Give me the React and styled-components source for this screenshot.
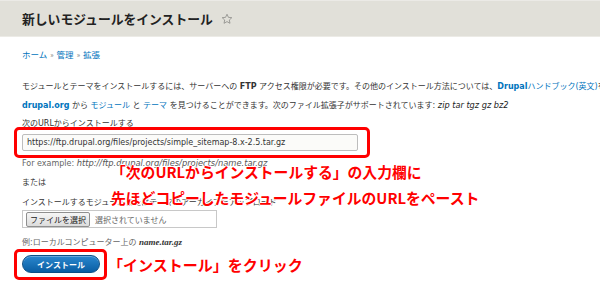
import React from 'react'
import styled, { createGlobalStyle } from 'styled-components'

const GlobalStyle = createGlobalStyle`
  html, body {
    margin: 0;
    padding: 0;
    background: #fff;
    overflow: hidden;
  }
  body {
    width: 600px;
    height: 294px;
    font-family: "DejaVu Sans", "Noto Sans CJK JP", sans-serif;
    color: #333;
  }
`

const Header = styled.header`
  display: flex;
  align-items: center;
  gap: 8px;
  height: 37px;
  padding: 0 22px;
  background: #e1e0d9;
  border-top: 1px solid #ebeae6;
  border-bottom: 1px solid #ecebe6;
  box-sizing: border-box;
`
const Title = styled.h1`
  margin: 0;
  font-family: "Noto Sans CJK JP", sans-serif;
  font-size: 12.8px;
  font-weight: 700;
  color: #222;
`
const Star = styled.svg`
  width: 12px;
  height: 12px;
  margin-top: 1px;
`

const Main = styled.main`
  padding: 0 22px;
  white-space: nowrap;
`
const Breadcrumb = styled.nav`
  display: flex;
  align-items: center;
  gap: 3px;
  margin-top: 11px;
  height: 12px;
  font-family: "Noto Sans CJK JP", sans-serif;
  font-size: 8.5px;
`
const Link = styled.a`
  color: #0074bd;
  text-decoration: none;
  font-weight: ${props => (props.$strong ? 700 : 400)};
`
const Sep = styled.span`
  color: #777;
  font-size: 7px;
`
const Para = styled.p`
  margin: ${props => props.$top}px 0 0;
  line-height: 12px;
  font-size: 8px;
`
const Strong = styled.b`
  font-weight: 700;
`
const Ext = styled.em`
  font-style: italic;
  font-family: "DejaVu Sans", sans-serif;
  font-size: 8.2px;
  color: #222;
`

const Form = styled.section`
  position: relative;
  margin-top: 6px;
`
const Label = styled.div`
  margin-top: ${props => props.$top || 0}px;
  line-height: 12px;
  font-size: 8px;
`
const Marked = styled.div`
  position: relative;
  display: ${props => (props.$inline ? 'inline-block' : 'block')};
  vertical-align: top;
  margin-top: ${props => props.$top || 0}px;
  &::after {
    content: '';
    position: absolute;
    top: ${props => props.$t}px;
    bottom: ${props => props.$b}px;
    left: ${props => props.$l}px;
    right: ${props => props.$r}px;
    border: 3px solid #f00;
    border-radius: 5px;
    pointer-events: none;
  }
`
const UrlInput = styled.input`
  display: block;
  width: 336px;
  height: 17px;
  margin: 0;
  padding: 0 4px;
  box-sizing: border-box;
  border: 1px solid #bdbdbd;
  border-radius: 2px;
  background: #fbfbf9;
  font-family: "DejaVu Sans", sans-serif;
  font-size: 8px;
  color: #333;
`
const Hint = styled.div`
  margin-top: ${props => props.$top || 0}px;
  line-height: 12px;
  font-size: 8px;
  color: #666;
`
const HintCode = styled.em`
  font-style: italic;
  font-family: ${props => (props.$serif ? '"Liberation Serif", serif' : '"DejaVu Sans", sans-serif')};
  font-weight: ${props => (props.$serif ? 700 : 400)};
  font-size: ${props => (props.$serif ? 9 : 8.3)}px;
  color: ${props => (props.$serif ? '#333' : '#555')};
`
const FileBox = styled.div`
  display: flex;
  align-items: center;
  gap: 5px;
  width: 195px;
  height: 18px;
  margin-top: 1px;
  padding: 0 3px;
  box-sizing: border-box;
  border: 1px solid #c8c8c8;
  background: #fff;
`
const FileButton = styled.span`
  display: inline-flex;
  align-items: center;
  height: 13px;
  padding: 0 3px;
  border: 1px solid #8f8f8f;
  border-radius: 2px;
  background: linear-gradient(#f6f6f6, #dcdcdc);
  font-family: "Noto Sans CJK JP", sans-serif;
  font-size: 8px;
  color: #222;
`
const FileName = styled.span`
  font-family: "Noto Sans CJK JP", sans-serif;
  font-size: 8px;
  color: #666;
`
const ActionRow = styled.div`
  display: flex;
  align-items: center;
  gap: 8px;
  margin-top: 6px;
`
const Button = styled.button`
  display: block;
  width: 78px;
  height: 18px;
  padding: 0;
  border: 1px solid #0b4f86;
  border-radius: 9px;
  background: linear-gradient(#2a87ce, #0a5ea3);
  color: #fff;
  font-family: "Noto Sans CJK JP", sans-serif;
  font-size: 8px;
  font-weight: 700;
  box-shadow: inset 0 1px 0 rgba(255, 255, 255, 0.3);
`
const Note = styled.span`
  font-family: "Noto Sans CJK JP", sans-serif;
  font-size: 15px;
  font-weight: 700;
  color: #f00;
  line-height: 1;
`
const Callout = styled.div`
  position: absolute;
  top: 41px;
  left: 89px;
  font-family: "Noto Sans CJK JP", sans-serif;
  font-size: 14.8px;
  font-weight: 700;
  line-height: 26px;
  color: #f00;
  text-shadow: 0 0 2px #fff, 1px 0 0 #fff, -1px 0 0 #fff, 0 1px 0 #fff, 0 -1px 0 #fff;
`

export default function App () {
  return (
    <>
      <GlobalStyle />
      <Header>
        <Title>新しいモジュールをインストール</Title>
        <Star viewBox='0 0 24 24'>
          <path
            d='M12 2.5l2.9 6.2 6.7.7-5 4.6 1.4 6.6L12 17.2l-6 3.4 1.4-6.6-5-4.6 6.7-.7z'
            fill='none'
            stroke='#8a8a86'
            strokeWidth='1.6'
            strokeLinejoin='round'
          />
        </Star>
      </Header>
      <Main>
        <Breadcrumb>
          <Link href='#'>ホーム</Link>
          <Sep>»</Sep>
          <Link href='#'>管理</Link>
          <Sep>»</Sep>
          <Link href='#'>拡張</Link>
        </Breadcrumb>
        <Para $top={21}>
          モジュールとテーマをインストールするには、サーバーへの <Strong>FTP</Strong> アクセス権限が必要です。その他のインストール方法については、<Link href='#'><Strong>Drupal</Strong>ハンドブック(英文)</Link>を参照してください。
        </Para>
        <Para $top={6}>
          <Link href='#' $strong>drupal.org</Link> から <Link href='#'>モジュール</Link> と <Link href='#'>テーマ</Link> を見つけることができます。次のファイル拡張子がサポートされています: <Ext>zip tar tgz gz bz2</Ext>
        </Para>
        <Form>
          <Label>次のURLからインストールする</Label>
          <Marked $top={4} $t={-7} $b={-7} $l={-8} $r={-12} $inline>
            <UrlInput readOnly value='https://ftp.drupal.org/files/projects/simple_sitemap-8.x-2.5.tar.gz' />
          </Marked>
          <Hint $top={6}>
            For example: <HintCode>http://ftp.drupal.org/files/projects/name.tar.gz</HintCode>
          </Hint>
          <Label $top={7}>または</Label>
          <Label $top={8}>インストールするモジュールまたはテーマのアーカイブをアップロード</Label>
          <FileBox>
            <FileButton>ファイルを選択</FileButton>
            <FileName>選択されていません</FileName>
          </FileBox>
          <Hint $top={8}>
            例:ローカルコンピューター上の <HintCode $serif>name.tar.gz</HintCode>
          </Hint>
          <ActionRow>
            <Marked $t={-6} $b={-7} $l={-8} $r={-7}>
              <Button type='button'>インストール</Button>
            </Marked>
            <Note>「インストール」をクリック</Note>
          </ActionRow>
          <Callout>
            「次のURLからインストールする」の入力欄に<br />
            先ほどコピーしたモジュールファイルのURLをペースト
          </Callout>
        </Form>
      </Main>
    </>
  )
}
